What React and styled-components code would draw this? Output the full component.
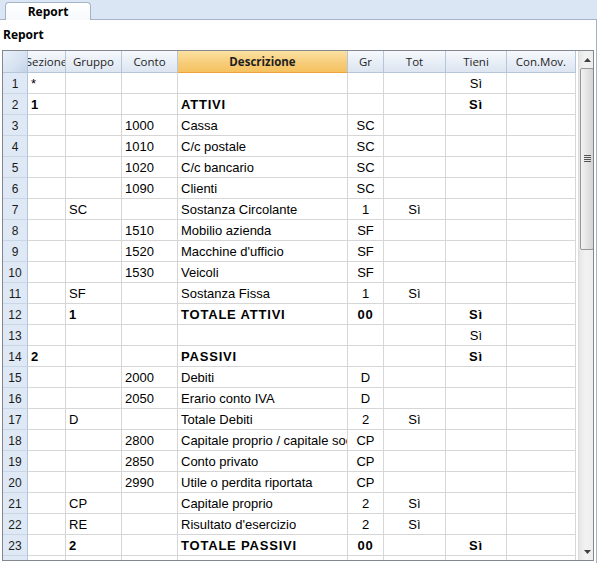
import React from 'react'
import styled, { createGlobalStyle } from 'styled-components'

const GlobalStyle = createGlobalStyle`
  html, body {
    margin: 0;
    padding: 0;
    background: #ffffff;
  }
  body {
    font-family: "Liberation Sans", Arial, sans-serif;
  }
`

const COLS = '25px 38px 56px 56px 170px 36px 62px 61px 69px'

const columns = [
  { key: 'sez', label: 'Sezione', align: 'left' },
  { key: 'gru', label: 'Gruppo', align: 'left' },
  { key: 'con', label: 'Conto', align: 'left' },
  { key: 'desc', label: 'Descrizione', align: 'left', active: true },
  { key: 'gr', label: 'Gr', align: 'center' },
  { key: 'tot', label: 'Tot', align: 'center' },
  { key: 'tieni', label: 'Tieni', align: 'center' },
  { key: 'mov', label: 'Con.Mov.', align: 'center' },
]

const rows = [
  { sez: '*', tieni: 'Sì' },
  { sez: '1', desc: 'ATTIVI', tieni: 'Sì', bold: true },
  { con: '1000', desc: 'Cassa', gr: 'SC' },
  { con: '1010', desc: 'C/c postale', gr: 'SC' },
  { con: '1020', desc: 'C/c bancario', gr: 'SC' },
  { con: '1090', desc: 'Clienti', gr: 'SC' },
  { gru: 'SC', desc: 'Sostanza Circolante', gr: '1', tot: 'Sì' },
  { con: '1510', desc: 'Mobilio azienda', gr: 'SF' },
  { con: '1520', desc: "Macchine d'ufficio", gr: 'SF' },
  { con: '1530', desc: 'Veicoli', gr: 'SF' },
  { gru: 'SF', desc: 'Sostanza Fissa', gr: '1', tot: 'Sì' },
  { gru: '1', desc: 'TOTALE ATTIVI', gr: '00', tieni: 'Sì', bold: true },
  { tieni: 'Sì' },
  { sez: '2', desc: 'PASSIVI', tieni: 'Sì', bold: true },
  { con: '2000', desc: 'Debiti', gr: 'D' },
  { con: '2050', desc: 'Erario conto IVA', gr: 'D' },
  { gru: 'D', desc: 'Totale Debiti', gr: '2', tot: 'Sì' },
  { con: '2800', desc: 'Capitale proprio / capitale sociale', gr: 'CP' },
  { con: '2850', desc: 'Conto privato', gr: 'CP' },
  { con: '2990', desc: 'Utile o perdita riportata', gr: 'CP' },
  { gru: 'CP', desc: 'Capitale proprio', gr: '2', tot: 'Sì' },
  { gru: 'RE', desc: "Risultato d'esercizio", gr: '2', tot: 'Sì' },
  { gru: '2', desc: 'TOTALE PASSIVI', gr: '00', tieni: 'Sì', bold: true },
  {},
]

const Window = styled.div`
  width: 597px;
  height: 563px;
  display: flex;
  flex-direction: column;
  overflow: hidden;
  background: #ffffff;
`

const TabStrip = styled.div`
  height: 20px;
  flex: none;
  background: #dbe6f4;
  display: flex;
  align-items: flex-end;
  padding-left: 5px;
  border-bottom: 1px solid #a3b3c8;
  box-sizing: border-box;
`

const Tab = styled.div`
  width: 86px;
  height: 18px;
  margin-bottom: -1px;
  box-sizing: border-box;
  background: linear-gradient(#ffffff, #f7f9fc);
  border: 1px solid #a3b3c8;
  border-bottom: none;
  border-radius: 4px 4px 0 0;
  font-family: "Open Sans", "Noto Sans", sans-serif;
  font-weight: 700;
  font-size: 12px;
  line-height: 17px;
  color: #000000;
  text-align: center;
`

const Panel = styled.div`
  flex: 1;
  display: flex;
  flex-direction: column;
  padding: 0 2px 2px 2px;
  border-right: 1px solid #a3b3c8;
  min-height: 0;
`

const Caption = styled.div`
  height: 30px;
  flex: none;
  padding-left: 1px;
  font-family: "Open Sans", "Noto Sans", sans-serif;
  font-weight: 700;
  font-size: 12px;
  line-height: 30px;
  color: #000000;
`

const GridFrame = styled.div`
  flex: 1;
  display: flex;
  border: 1px solid #828790;
  min-height: 0;
  overflow: hidden;
`

const Table = styled.div`
  width: 573px;
  flex: none;
  display: flex;
  flex-direction: column;
  overflow: hidden;
`

const Row = styled.div`
  display: grid;
  grid-template-columns: ${COLS};
  height: ${(p) => (p.$header ? '22px' : '21px')};
  flex: none;
`

const Corner = styled.div`
  background: linear-gradient(135deg, #e9f0f9 0%, #d6e2f1 60%, #c3d3e8 100%);
  border-right: 1px solid #b5c5da;
  border-bottom: 1px solid #b5c5da;
`

const HeadCell = styled.div`
  overflow: hidden;
  white-space: nowrap;
  display: flex;
  align-items: center;
  justify-content: center;
  font-family: "Open Sans", "Noto Sans", sans-serif;
  font-size: 11.5px;
  font-weight: ${(p) => (p.$active ? 700 : 400)};
  color: #1e1e1e;
  background: ${(p) =>
    p.$active
      ? 'linear-gradient(#fbe1a2, #f7cd7a 55%, #f5c25f)'
      : 'linear-gradient(#f6f9fc, #e9eff7 50%, #dce5f1)'};
  border-right: 1px solid #b5c5da;
  border-bottom: 1px solid ${(p) => (p.$active ? '#eda33a' : '#b5c5da')};
`

const NumCell = styled.div`
  background: #dfe9f6;
  border-right: 1px solid #b5c5da;
  border-bottom: 1px solid #c9d6e6;
  font-size: 12px;
  color: #1a1a1a;
  text-align: center;
  padding-top: 2px;
  line-height: 18px;
`

const Cell = styled.div`
  overflow: hidden;
  white-space: nowrap;
  border-right: 1px solid #d6d6d6;
  border-bottom: 1px solid #d6d6d6;
  padding: 2px 3px 0 3px;
  font-size: 13px;
  line-height: 18px;
  color: #000000;
  text-align: ${(p) => p.$align};
  font-weight: ${(p) => (p.$bold ? 700 : 400)};
  letter-spacing: ${(p) => (p.$bold ? '0.8px' : '0')};
`

const ScrollBar = styled.div`
  width: 16px;
  margin-left: 2px;
  flex: none;
  display: flex;
  flex-direction: column;
  background: linear-gradient(90deg, #e6e6e6, #f2f2f2 40%, #ececec);
  border-left: 1px solid #dcdcdc;
`

const ArrowBtn = styled.div`
  height: 17px;
  flex: none;
  display: flex;
  align-items: center;
  justify-content: center;
`

const Thumb = styled.div`
  height: 182px;
  margin: 0 1px;
  flex: none;
  box-sizing: border-box;
  border: 1px solid #979797;
  border-radius: 2px;
  background: linear-gradient(90deg, #f3f3f3, #e4e4e4 50%, #d4d4d4);
  display: flex;
  align-items: center;
  justify-content: center;
`

const Track = styled.div`
  flex: 1;
`

const Arrow = ({ down }) => (
  <svg width="7" height="4" viewBox="0 0 7 4">
    <path d={down ? 'M0 0 H7 L3.5 4 Z' : 'M0 4 H7 L3.5 0 Z'} fill="#404040" />
  </svg>
)

const Grip = () => (
  <svg width="7" height="8" viewBox="0 0 7 8">
    {[0, 2, 4, 6].map((y) => (
      <rect key={y} x="0" y={y} width="7" height="1" fill="#555" />
    ))}
  </svg>
)

export default function App() {
  return (
    <>
      <GlobalStyle />
      <Window>
        <TabStrip>
          <Tab>Report</Tab>
        </TabStrip>
        <Panel>
          <Caption>Report</Caption>
          <GridFrame>
            <Table>
              <Row $header>
                <Corner />
                {columns.map((c) => (
                  <HeadCell key={c.key} $active={c.active}>
                    {c.label}
                  </HeadCell>
                ))}
              </Row>
              {rows.map((r, i) => (
                <Row key={i}>
                  <NumCell>{i + 1}</NumCell>
                  {columns.map((c) => (
                    <Cell key={c.key} $align={c.align} $bold={r.bold}>
                      {r[c.key] || ''}
                    </Cell>
                  ))}
                </Row>
              ))}
            </Table>
            <ScrollBar>
              <ArrowBtn>
                <Arrow />
              </ArrowBtn>
              <Thumb>
                <Grip />
              </Thumb>
              <Track />
              <ArrowBtn>
                <Arrow down />
              </ArrowBtn>
            </ScrollBar>
          </GridFrame>
        </Panel>
      </Window>
    </>
  )
}
